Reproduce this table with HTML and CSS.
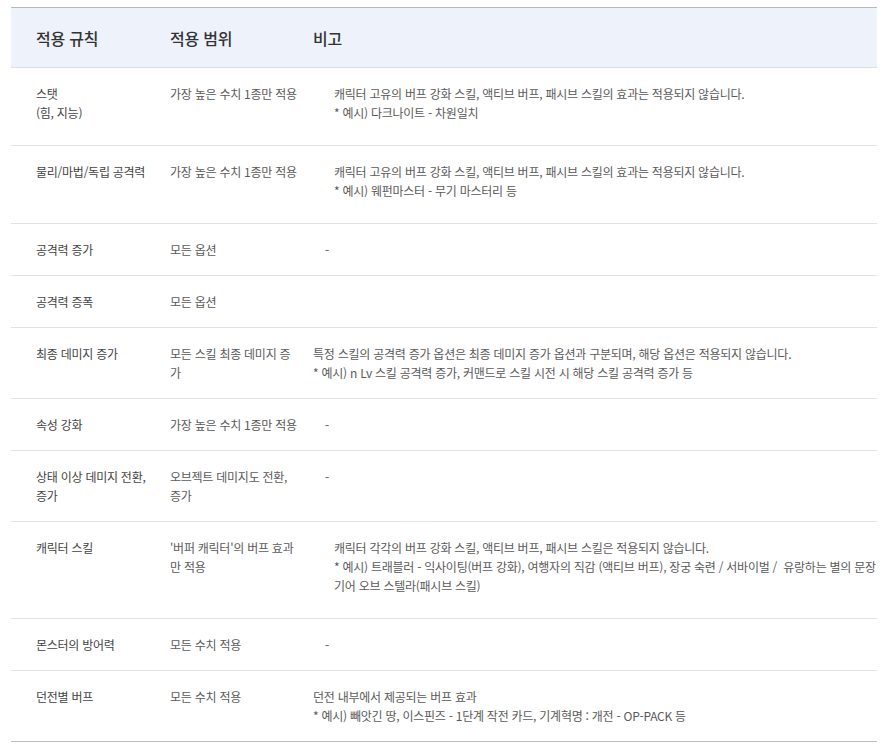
FILE: index.html
```html
<!DOCTYPE html>
<html lang="ko">
<head>
<meta charset="utf-8">
<link rel="stylesheet" href="styles.css">
</head>
<body>
<table class="rules">
  <colgroup>
    <col class="c1"><col class="c2"><col class="c3">
  </colgroup>
  <thead>
    <tr><th>적용 규칙</th><th>적용 범위</th><th>비고</th></tr>
  </thead>
  <tbody>
    <tr>
      <td class="name">스탯<br>(힘, 지능)</td>
      <td>가장 높은 수치 1종만 적용</td>
      <td><div class="note">캐릭터 고유의 버프 강화 스킬, 액티브 버프, 패시브 스킬의 효과는 적용되지 않습니다.<br>* 예시) 다크나이트 - 차원일치</div></td>
    </tr>
    <tr>
      <td class="name">물리/마법/독립 공격력</td>
      <td>가장 높은 수치 1종만 적용</td>
      <td><div class="note">캐릭터 고유의 버프 강화 스킬, 액티브 버프, 패시브 스킬의 효과는 적용되지 않습니다.<br>* 예시) 웨펀마스터 - 무기 마스터리 등</div></td>
    </tr>
    <tr>
      <td class="name">공격력 증가</td>
      <td>모든 옵션</td>
      <td><span class="dash">-</span></td>
    </tr>
    <tr>
      <td class="name">공격력 증폭</td>
      <td>모든 옵션</td>
      <td></td>
    </tr>
    <tr>
      <td class="name">최종 데미지 증가</td>
      <td>모든 스킬 최종 데미지 증<br>가</td>
      <td>특정 스킬의 공격력 증가 옵션은 최종 데미지 증가 옵션과 구분되며, 해당 옵션은 적용되지 않습니다.<br>* 예시) n Lv 스킬 공격력 증가, 커맨드로 스킬 시전 시 해당 스킬 공격력 증가 등</td>
    </tr>
    <tr>
      <td class="name">속성 강화</td>
      <td>가장 높은 수치 1종만 적용</td>
      <td><span class="dash">-</span></td>
    </tr>
    <tr>
      <td class="name">상태 이상 데미지 전환,<br>증가</td>
      <td>오브젝트 데미지도 전환,<br>증가</td>
      <td><span class="dash">-</span></td>
    </tr>
    <tr>
      <td class="name">캐릭터 스킬</td>
      <td>'버퍼 캐릭터'의 버프 효과<br>만 적용</td>
      <td><div class="note">캐릭터 각각의 버프 강화 스킬, 액티브 버프, 패시브 스킬은 적용되지 않습니다.<br>* 예시) 트래블러 - 익사이팅(버프 강화), 여행자의 직감 (액티브 버프), 장궁 숙련 / 서바이벌 /&nbsp; 유랑하는 별의 문장<br>기어 오브 스텔라(패시브 스킬)</div></td>
    </tr>
    <tr>
      <td class="name">몬스터의 방어력</td>
      <td>모든 수치 적용</td>
      <td><span class="dash">-</span></td>
    </tr>
    <tr class="last">
      <td class="name">던전별 버프</td>
      <td>모든 수치 적용</td>
      <td>던전 내부에서 제공되는 버프 효과<br>* 예시) 빼앗긴 땅, 이스핀즈 - 1단계 작전 카드, 기계혁명 : 개전 - OP-PACK 등</td>
    </tr>
  </tbody>
</table>
</body>
</html>
```

FILE: styles.css
```css
html, body {
  margin: 0;
  padding: 0;
  background: #ffffff;
}

body {
  padding: 7px 0 0 11px;
  font-family: "Noto Sans CJK KR", "Noto Sans", sans-serif;
}

.rules {
  width: 866px;
  border-collapse: collapse;
  table-layout: fixed;
  border-top: 1px solid #b8b8b8;
  border-bottom: 1px solid #bdbdbd;
}

.c1 { width: 159px; }
.c2 { width: 143px; }

.rules th {
  height: 59px;
  padding: 0;
  background: #edf2fb;
  border-bottom: 1px solid #d9dde4;
  text-align: left;
  font-size: 16px;
  font-weight: 500;
  letter-spacing: -0.2px;
  color: #333333;
  vertical-align: middle;
}

.rules th:first-child,
.rules td:first-child {
  padding-left: 25px;
}

.rules td {
  padding: 16px 0 16px 0;
  border-bottom: 1px solid #e3e3e3;
  vertical-align: top;
  font-size: 12px;
  line-height: 19px;
  letter-spacing: -0.25px;
  color: #5a5a5a;
  white-space: nowrap;
}

.rules td.name {
  color: #444444;
}

.rules tr.last td {
  border-bottom: none;
}

.note {
  padding: 0 0 7px 21px;
}

.dash {
  padding-left: 12px;
}
```
